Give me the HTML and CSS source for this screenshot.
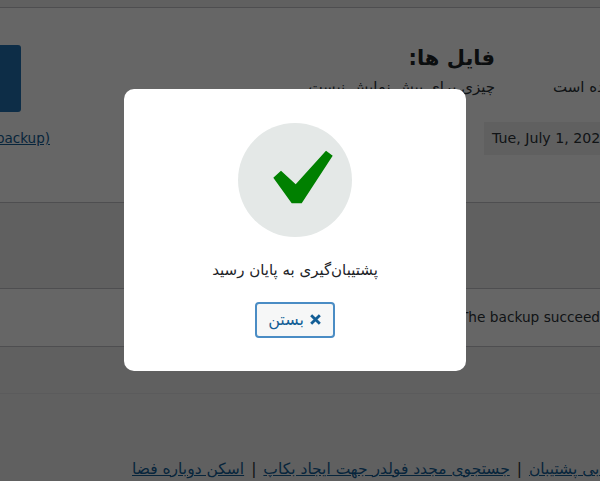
FILE: index.html
```html
<!DOCTYPE html>
<html lang="fa">
<head>
<meta charset="utf-8">
<title>پشتیبان‌گیری</title>
<link rel="stylesheet" href="styles.css">
</head>
<body>
<div class="page">
  <div class="topbar"></div>
  <section class="summary">
    <div class="side">
      <div class="primary"></div>
      <a class="side-link" href="#">(backup)</a>
    </div>
    <h2 class="files-title" dir="rtl">فایل ها:</h2>
    <p class="files-empty" dir="rtl">چیزی برای پیش نمایش نیست</p>
    <p class="made">تهیه شده است</p>
    <div class="date">Tue, July 1, 2025</div>
  </section>
  <div class="row row-head"></div>
  <div class="row row-log"><span>The backup succeeded</span></div>
  <div class="row row-empty"></div>
  <footer class="links">
    <a href="#" dir="rtl">اسکن دوباره فضا</a>
    <span>|</span>
    <a href="#" dir="rtl">جستجوی مجدد فولدر جهت ایجاد بکاپ</a>
    <span>|</span>
    <a href="#" dir="rtl">بازیابی پشتیبان</a>
  </footer>
</div>
<div class="backdrop">
  <div class="dialog">
    <div class="badge">
      <svg class="check" viewBox="0 0 114 114" aria-hidden="true"><path d="M88 27.7L94.7 32.7L63.7 80.3H53.7L35.3 54.7L43 47.7L57.7 61.3Z"/></svg>
    </div>
    <p class="message" dir="rtl">پشتیبان‌گیری به پایان رسید</p>
    <button class="close" type="button" dir="rtl">
      <svg class="close-x" viewBox="0 0 12 12" aria-hidden="true"><path d="M2 2L10 10M10 2L2 10"/></svg>
      <span>بستن</span>
    </button>
  </div>
</div>
</body>
</html>
```
FILE: styles.css
```css
* { box-sizing: border-box; }
html, body { margin: 0; height: 100%; overflow: hidden; }
body {
  background: #f0f0f1;
  color: #2c3338;
  font-family: "DejaVu Sans", sans-serif;
  font-size: 13px;
}
a { color: #135e96; }
.page { width: 600px; height: 481px; overflow: hidden; }
.topbar { height: 8px; border-bottom: 1px solid #c3c4c7; }
.summary {
  height: 194px;
  background: #fff;
  display: grid;
  grid-template-columns: 50px 434px 11px 105px;
  grid-template-rows: 36px 28px 20px 62px 1fr;
  white-space: nowrap;
}
.side {
  grid-column: 1;
  grid-row: 1 / -1;
  padding-top: 37px;
  display: flex;
  flex-direction: column;
  align-items: flex-end;
}
.primary { width: 21px; height: 67px; margin-right: 29px; background: #2271b1; border-radius: 0 3px 3px 0; }
.side-link { margin-top: 18px; font-size: 13.5px; }
.files-title {
  grid-column: 2 / 4;
  grid-row: 2;
  margin: 0;
  font-size: 21px;
  line-height: 28px;
  font-weight: 700;
  color: #1d2327;
  text-align: right;
}
.files-empty {
  grid-column: 2 / 4;
  grid-row: 3;
  margin: 0;
  font-size: 15px;
  line-height: 20px;
  padding-top: 5px;
}
.made {
  grid-column: 4;
  grid-row: 3;
  margin: 0;
  padding-left: 58px;
  font-size: 15px;
  line-height: 20px;
  padding-top: 5px;
}
.date {
  grid-column: 3 / 5;
  grid-row: 4;
  margin-top: 30px;
  height: 33px;
  padding-left: 8px;
  line-height: 33px;
  background: #f0f0f1;
  font-size: 14.2px;
}
.row { border-top: 1px solid #c3c4c7; white-space: nowrap; }
.row-head { height: 86px; background: #f0f0f1; }
.row-log { height: 58px; background: #fff; padding: 19px 0 0 460px; font-size: 13.7px; line-height: 18px; }
.row-empty { height: 47px; background: #f0f0f1; }
.links {
  border-top: 1px solid #e4e4e6;
  height: 88px;
  padding: 65px 0 0 132px;
  white-space: nowrap;
  display: flex;
  gap: 7px;
  font-size: 15.5px;
  line-height: 20px;
}
.links a, .links span { flex: none; }
.backdrop {
  position: fixed;
  inset: 0;
  padding: 0 10px 22px 0;
  background: rgba(0, 0, 0, 0.6);
  display: flex;
  align-items: center;
  justify-content: center;
}
.dialog {
  width: 342px;
  height: 282px;
  background: #fff;
  border-radius: 10px;
  padding-top: 34px;
  display: flex;
  flex-direction: column;
  align-items: center;
}
.badge { width: 114px; height: 114px; border-radius: 50%; background: #e4e8e7; flex: none; }
.check { display: block; width: 114px; height: 114px; fill: #008000; }
.message { margin: 23px 0 0; font-size: 15px; line-height: 20px; color: #1d2327; }
.close {
  margin-top: 22px;
  width: 80px;
  height: 36px;
  display: flex;
  align-items: center;
  justify-content: center;
  gap: 5px;
  background: #f6f7f7;
  border: 2px solid #4a8cc4;
  border-radius: 4px;
  color: #135e96;
  font: inherit;
  font-size: 16px;
  padding: 0;
}
.close-x { width: 13px; height: 13px; fill: none; stroke: #135e96; stroke-width: 2.6; }
```
